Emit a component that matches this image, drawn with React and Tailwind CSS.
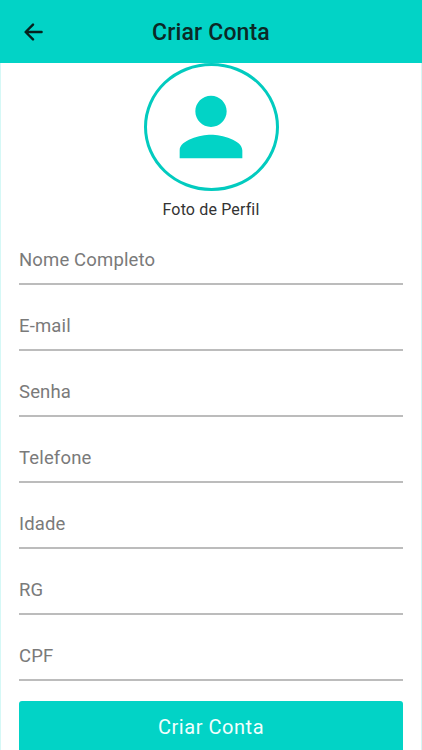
import React from 'react';
import { MdPerson } from 'react-icons/md';

const fields = [
  { name: 'nome', label: 'Nome Completo', type: 'text' },
  { name: 'email', label: 'E-mail', type: 'email' },
  { name: 'senha', label: 'Senha', type: 'password' },
  { name: 'telefone', label: 'Telefone', type: 'tel' },
  { name: 'idade', label: 'Idade', type: 'text' },
  { name: 'rg', label: 'RG', type: 'text' },
  { name: 'cpf', label: 'CPF', type: 'text' },
];

const BackIcon = () => (
  <svg width="19" height="18" viewBox="0 0 19 18" fill="none" stroke="currentColor" strokeWidth="2.4" strokeLinecap="round" strokeLinejoin="round">
    <path d="M17.6 9H2M9 1.6L1.6 9l7.4 7.4" />
  </svg>
);

const Header = () => (
  <header className="grid h-[63px] shrink-0 grid-cols-[1fr_auto_1fr] items-center bg-[#02d3c6]">
    <button aria-label="Voltar" className="justify-self-start pl-[24px] text-[#06211e]">
      <BackIcon />
    </button>
    <h1 className="pt-[4px] text-[23px] font-medium tracking-[0.15px] text-[#0b2926]">Criar Conta</h1>
  </header>
);

const App = () => {
  return (
    <div className="flex h-[750px] w-[422px] flex-col overflow-hidden bg-white font-[Roboto,sans-serif]">
      <Header />

      <main className="flex-1 border-x border-[#d5f8f6]">
        {/* Profile picture */}
        <div className="flex flex-col items-center">
          <div className="flex h-[128px] w-[135px] items-center justify-center rounded-[50%] border-[3px] border-[#02cbbf]">
            <MdPerson className="h-[94px] w-[94px] text-[#02d3c6]" />
          </div>
          <p className="mt-[10px] text-base leading-[18px] tracking-[0.15px] text-[#333]">Foto de Perfil</p>
        </div>

        <form className="flex flex-col px-[18px]">
          {fields.map((field) => (
            <input
              key={field.name}
              type={field.type}
              placeholder={field.label}
              className="mt-[10px] h-[56px] border-b-2 border-[#bcbcbc] pt-[8px] text-[18.5px] tracking-[0.15px] outline-none placeholder:text-[#7a7a7a]"
            />
          ))}
          <button
            type="button"
            className="mt-[20px] h-[52px] rounded-[3px] bg-[#02d3c6] text-[20px] tracking-[0.55px] text-[#f2fffe]"
          >
            Criar Conta
          </button>
        </form>
      </main>
    </div>
  );
};

export default App;
